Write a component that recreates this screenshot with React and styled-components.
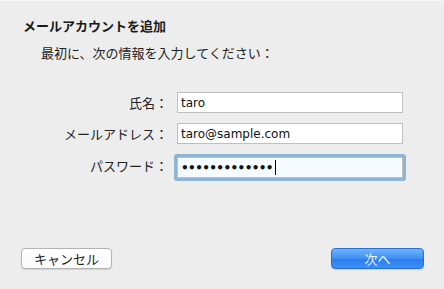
import React from "react";
import styled, { createGlobalStyle } from "styled-components";

const Global = createGlobalStyle`
  html, body { margin: 0; padding: 0; background: #ededed; }
  * { box-sizing: border-box; }
`;

const Sheet = styled.div`
  width: 444px;
  height: 289px;
  background: #ededed;
  border-top: 1px solid #f6f6f6;
  display: flex;
  flex-direction: column;
  padding: 16px 20px 20px 21px;
  font-family: "Noto Sans CJK JP", "DejaVu Sans", sans-serif;
  color: #1a1a1a;
`;

const Title = styled.h1`
  margin: 0 0 0 2px;
  font-size: 13px;
  font-weight: 700;
  line-height: 18px;
`;

const Intro = styled.p`
  margin: 9px 0 0 20px;
  font-size: 13px;
  line-height: 18px;
  color: #222;
`;

const Form = styled.div`
  display: grid;
  grid-template-columns: 144px 226px;
  column-gap: 12px;
  row-gap: 10px;
  align-items: center;
  margin-top: 30px;
`;

const Label = styled.div`
  text-align: right;
  font-size: 13px;
  line-height: 18px;
  color: #222;
  margin-right: -3px;
`;

const Field = styled.div`
  height: 21px;
  background: ${(p) => (p.$focus ? "#f6fbff" : "#ffffff")};
  border: 1px solid #bfbfbf;
  box-shadow: ${(p) => (p.$focus ? "0 0 0 3px #8fb5d6" : "none")};
  border-radius: ${(p) => (p.$focus ? "1px" : "0")};
  margin-top: ${(p) => (p.$focus ? "3px" : "0")};
  padding: 0 0 0 3px;
  display: flex;
  align-items: center;
  font-family: "DejaVu Sans", sans-serif;
  font-size: 12px;
  color: #111;
  white-space: nowrap;
`;

const Dots = styled.span`
  font-size: 12px;
  letter-spacing: -0.6px;
  font-weight: 700;
`;

const Caret = styled.span`
  display: inline-block;
  width: 1px;
  height: 15px;
  background: #000;
  margin-left: 2px;
`;

const Footer = styled.div`
  margin-top: auto;
  display: flex;
  justify-content: space-between;
  align-items: center;
`;

const Button = styled.button`
  height: 21px;
  width: ${(p) => (p.$primary ? "93px" : "91px")};
  border-radius: 4px;
  font-family: "Noto Sans CJK JP", sans-serif;
  font-size: 13px;
  line-height: 1;
  padding: 0;
  display: flex;
  align-items: center;
  justify-content: center;
  border: 1px solid ${(p) => (p.$primary ? "#2a6fd0" : "#b3b3b3")};
  color: ${(p) => (p.$primary ? "#eef6ff" : "#222")};
  background: ${(p) =>
    p.$primary
      ? "linear-gradient(#6fb4fa, #3f8ef4 50%, #2a7cf0 51%, #3b8ff6)"
      : "linear-gradient(#ffffff, #fafafa)"};
  box-shadow: 0 1px 1px rgba(0, 0, 0, 0.12);
`;

export default function App() {
  return (
    <>
      <Global />
      <Sheet>
        <Title>メールアカウントを追加</Title>
        <Intro>最初に、次の情報を入力してください：</Intro>
        <Form>
          <Label>氏名：</Label>
          <Field>taro</Field>
          <Label>メールアドレス：</Label>
          <Field>taro@sample.com</Field>
          <Label>パスワード：</Label>
          <Field $focus>
            <Dots>•••••••••••••</Dots>
            <Caret />
          </Field>
        </Form>
        <Footer>
          <Button>キャンセル</Button>
          <Button $primary>次へ</Button>
        </Footer>
      </Sheet>
    </>
  );
}
